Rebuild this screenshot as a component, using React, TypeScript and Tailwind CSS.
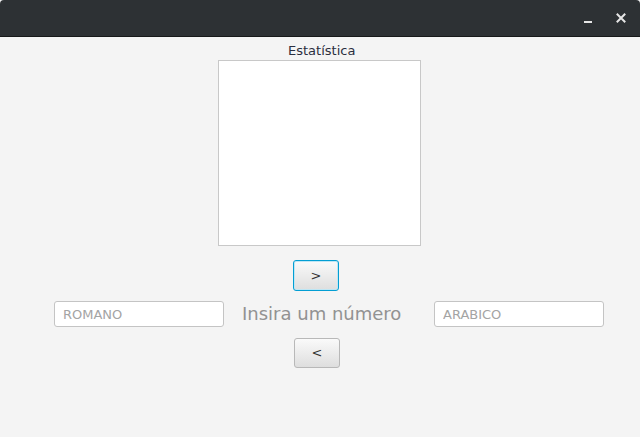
import React from 'react';

const font = { fontFamily: '"DejaVu Sans", "Liberation Sans", sans-serif' };

// --- barra de título da janela ---
const TitleBar: React.FC = () => (
  <div className="h-[37px] bg-[#2d3134] border-b border-[#17191a] rounded-t-[4px] flex items-center justify-end">
    <div className="w-[16px] flex justify-center mr-[20px] pt-[8px]">
      <div className="w-[8px] h-[2px] bg-[#e6e6e6]" />
    </div>
    <svg width="10" height="10" viewBox="0 0 10 10" className="mr-[14px]">
      <path d="M1.5 1.5 L8.5 8.5 M8.5 1.5 L1.5 8.5" stroke="#e6e6e6" strokeWidth="2" strokeLinecap="square" />
    </svg>
  </div>
);

const Button: React.FC<{ label: string; focused?: boolean }> = ({ label, focused }) => (
  <button
    className={`flex items-center justify-center rounded-[3px] bg-gradient-to-b from-[#fafafa] to-[#dedede] text-[13px] text-[#333333] ${
      focused
        ? 'w-[46px] h-[31px] border border-[#039ed3] shadow-[inset_0_0_0_1px_#bfe6f4]'
        : 'w-[46px] h-[30px] border border-[#b8b8b8]'
    }`}
    style={font}
  >
    {label}
  </button>
);

const Field: React.FC<{ placeholder: string }> = ({ placeholder }) => (
  <input
    placeholder={placeholder}
    className="w-[170px] h-[26px] bg-white border border-[#c4c4c4] rounded-[3px] px-[8px] text-[13px] text-[#333333] placeholder:text-[#a4a4a4] outline-none"
    style={font}
  />
);

const App: React.FC = () => {
  return (
    <div className="w-[640px] h-[437px] bg-[#f4f4f4] flex flex-col" style={font}>
      <TitleBar />
      <div className="flex flex-col items-start pt-[6px]">
        <div className="ml-[288px] h-[16px] leading-[16px] text-[13px] text-[#2b2f3f]">Estatística</div>
        <div className="ml-[218px] mt-[1px] w-[203px] h-[186px] bg-white border border-[#c8c8c8]" />
        <div className="ml-[293px] mt-[14px]">
          <Button label=">" focused />
        </div>
      </div>
      <div className="mt-[10px] flex items-center pl-[54px]">
        <Field placeholder="ROMANO" />
        <div className="ml-[18px] w-[160px] text-[18px] leading-[26px] text-[#929292] whitespace-nowrap">Insira um número</div>
        <div className="ml-[32px]">
          <Field placeholder="ARABICO" />
        </div>
      </div>
      <div className="mt-[11px] pl-[294px]">
        <Button label="<" />
      </div>
    </div>
  );
};

export default App;
